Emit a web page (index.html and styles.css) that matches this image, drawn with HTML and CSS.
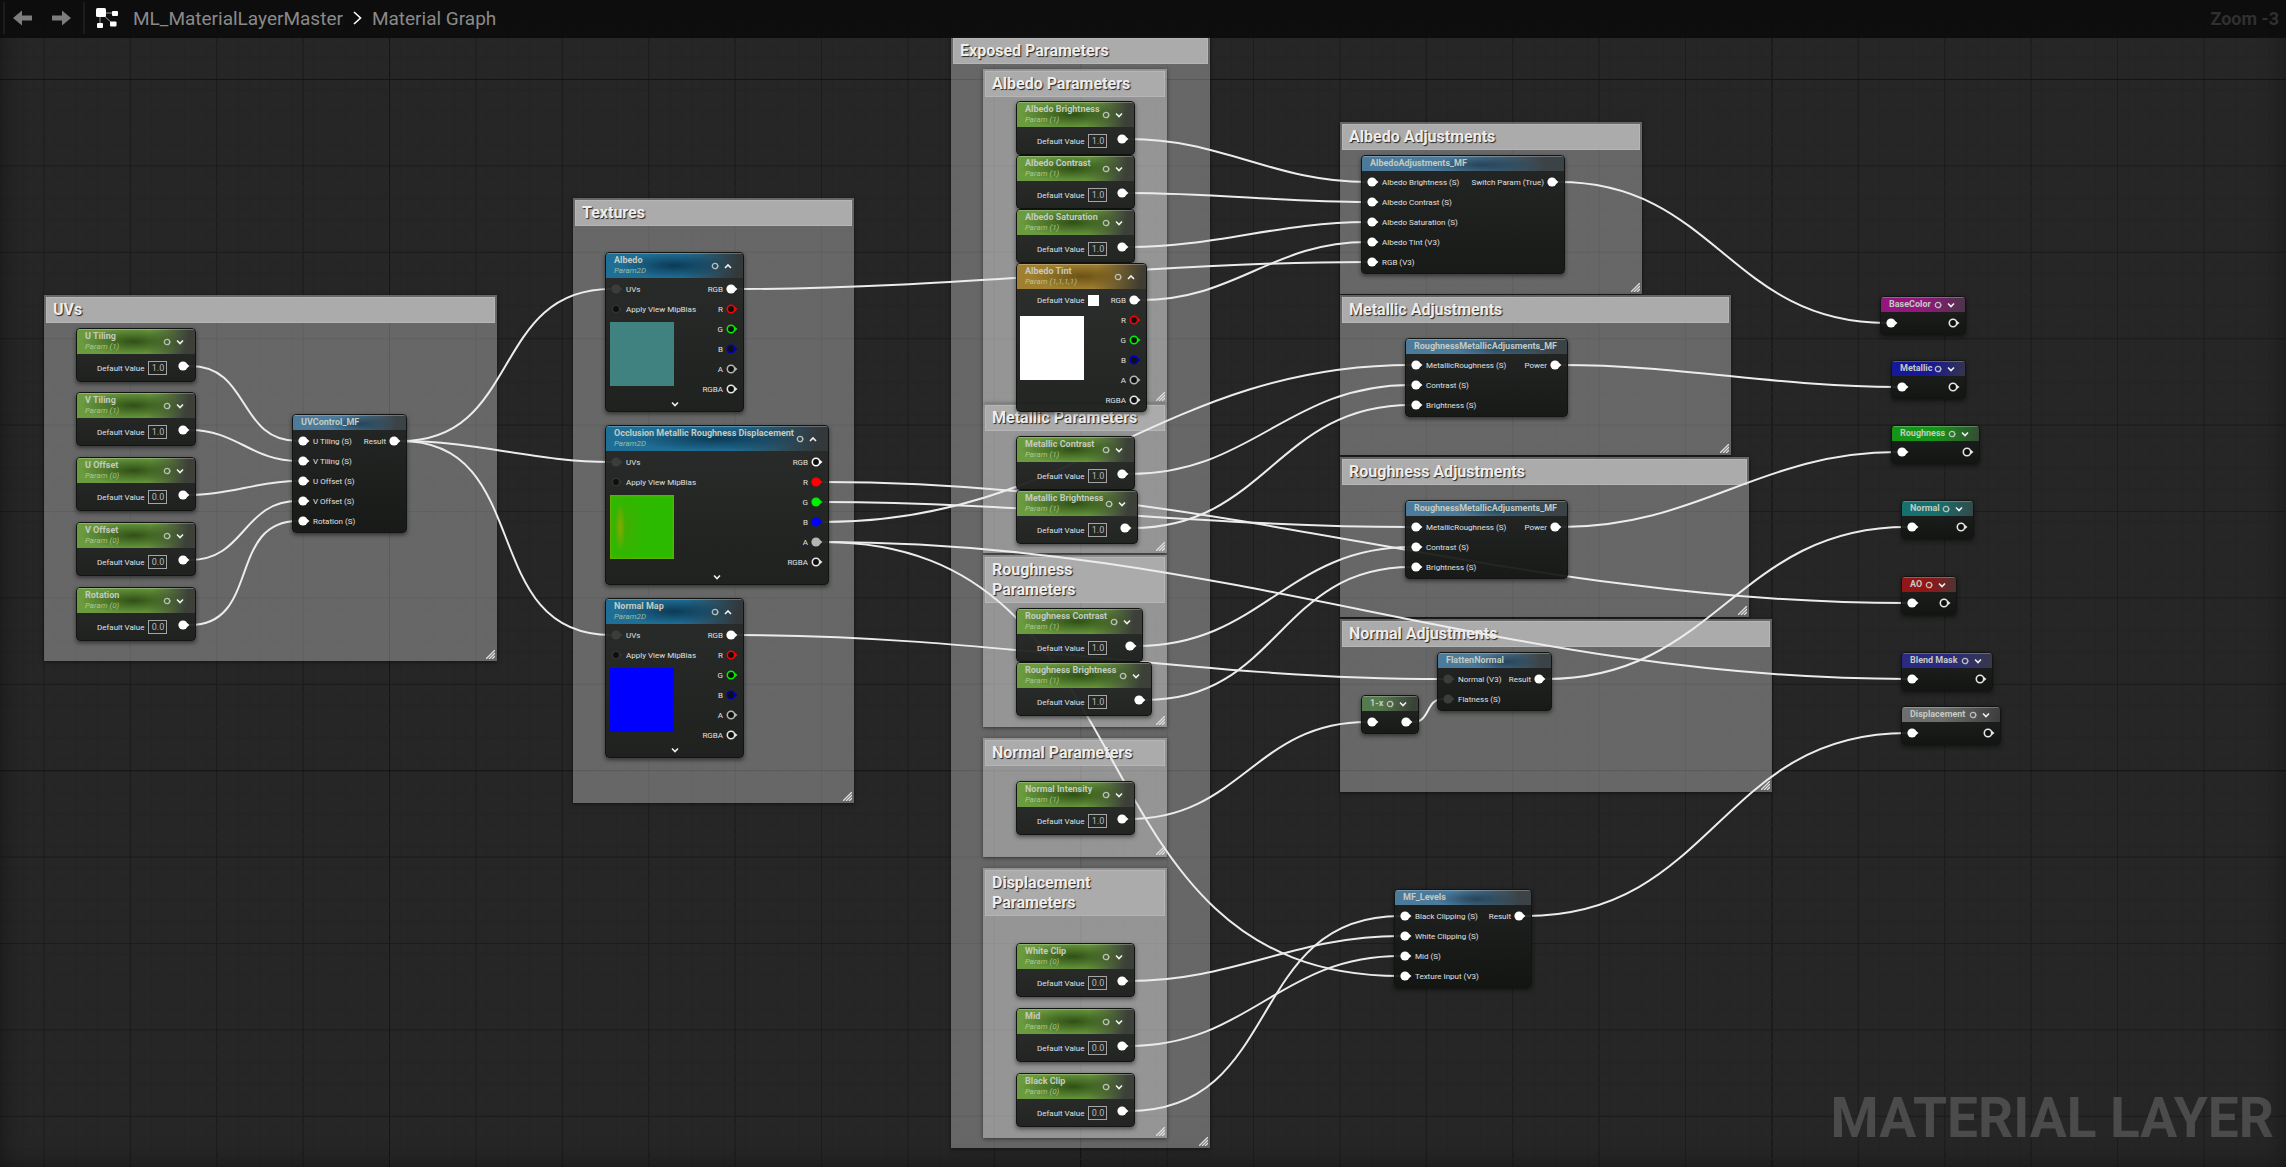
FILE: index.html
```html
<!DOCTYPE html>
<html lang="en">
<head>
  <meta charset="UTF-8" />
  <meta name="viewport" content="width=device-width, initial-scale=1.0"/>
  <title>ML_MaterialLayerMaster - Material Graph</title>
  <link rel="stylesheet" href="styles.css">
</head>
<body>
  <header class="topbar">
    <div class="history">
      <button class="icon-btn" aria-label="Back">
        <svg width="20" height="16" viewBox="0 0 20 16"><path d="M0 8 L9 0.5 V5.5 H19 V10.5 H9 V15.5 Z" fill="#7d7d7d"/></svg>
      </button>
      <button class="icon-btn" aria-label="Forward">
        <svg width="20" height="16" viewBox="0 0 20 16"><path d="M20 8 L11 0.5 V5.5 H1 V10.5 H11 V15.5 Z" fill="#7d7d7d"/></svg>
      </button>
    </div>
    <svg class="graph-icon" width="22" height="20" viewBox="0 0 22 20">
      <path d="M4 5 H18 M4 5 V17 M5 5 L17 16" stroke="#9a9a9a" stroke-width="1" fill="none"/>
      <rect x="0" y="0" width="10" height="9" rx="1.5" fill="#fff"/>
      <rect x="16" y="3" width="6" height="5" rx="1" fill="#fff"/>
      <rect x="1" y="15" width="6" height="5" rx="1" fill="#fff"/>
      <rect x="14" y="13.5" width="6.5" height="5" rx="1" fill="#fff"/>
    </svg>
    <nav class="breadcrumb">
      <a href="#">ML_MaterialLayerMaster</a>
      <svg width="9" height="14" viewBox="0 0 9 14"><path d="M1 1 L7.5 7 L1 13" stroke="#fff" stroke-width="1.6" fill="none"/></svg>
      <a href="#">Material Graph</a>
    </nav>
    <span class="zoom">Zoom -3</span>
  </header>

  <main class="canvas" id="canvas">
    <svg class="layer" id="grid"></svg>
    <div id="comments"></div>
    <svg class="layer" id="wires"></svg>
    <div id="nodes"></div>
    <div class="watermark">MATERIAL LAYER</div>
  </main>

  <script src="script.js"></script>
</body>
</html>
```

FILE: styles.css
```css
* {
  box-sizing: border-box;
}
body {
  margin: 0;
  height: 100vh;
  overflow: hidden;
  background: #262626;
  font-family: Roboto, "Liberation Sans", sans-serif;
  color: #e0e0e0;
}
button {
  padding: 0;
  border: none;
  background: none;
  color: inherit;
  cursor: pointer;
  display: flex;
}
svg {
  display: block;
}

/* Top bar */
.topbar {
  position: relative;
  z-index: 2;
  display: flex;
  align-items: center;
  height: 38px;
  padding: 0 7px 2px 3px;
  background: rgba(13, 13, 13, 0.95);
}
.history {
  display: flex;
  align-items: center;
  gap: 18px;
  height: 32px;
  padding: 0 12px 0 8px;
  border-left: 2px solid #1c1c1c;
  border-right: 2px solid #1c1c1c;
}
.graph-icon {
  margin: 0 15px 0 11px;
}
.breadcrumb {
  display: flex;
  align-items: center;
  gap: 10px;
  font-size: 19px;
}
.breadcrumb a {
  color: #8a8a8a;
  text-decoration: none;
}
.zoom {
  margin-left: auto;
  font-size: 18px;
  font-weight: bold;
  color: #303030;
}

/* Canvas */
.canvas {
  position: absolute;
  inset: 0;
  overflow: hidden;
}
.canvas::after {
  content: "";
  position: absolute;
  inset: 0;
  pointer-events: none;
  box-shadow: inset 0 0 24px rgba(0, 0, 0, 0.45);
}
.layer {
  position: absolute;
  inset: 0;
  width: 100%;
  height: 100%;
}
.wire {
  fill: none;
  stroke: #ececec;
  stroke-width: 2;
}
.watermark {
  position: absolute;
  right: 12px;
  bottom: 17px;
  font-size: 55px;
  line-height: 64px;
  font-weight: bold;
  color: #4b4b4b;
}

/* Comment boxes */
.comment {
  position: absolute;
  padding: 2px;
  background: rgba(255, 255, 255, 0.3);
  box-shadow: 0 1px 4px rgba(0, 0, 0, 0.5);
}
.comment h2 {
  margin: 0;
  padding: 2px 6px;
  background: #ababab;
  border: 1px solid #b6b6b6;
  font-size: 16px;
  line-height: 20px;
  font-weight: bold;
  color: #ededed;
  text-shadow: 1px 1px 1px #222;
}
.comment .grip {
  position: absolute;
  right: 2px;
  bottom: 2px;
}

/* Nodes */
.node {
  position: absolute;
  border: 1px solid #121412;
  border-radius: 4px;
  background: linear-gradient(rgba(37, 40, 38, 0.93), rgba(26, 28, 26, 0.93));
  box-shadow: 0 2px 4px rgba(0, 0, 0, 0.5);
  overflow: hidden;
  font-size: 8px;
}
.node.function, .node.output {
  background: linear-gradient(rgba(31, 34, 32, 0.93), rgba(18, 20, 18, 0.93));
}
.head {
  display: flex;
  align-items: center;
  height: 15px;
  padding: 0 11px 0 8px;
  box-shadow: inset 0 1px 0 rgba(255, 255, 255, 0.25);
}
.head.tall {
  height: 25px;
}
.output .head {
  padding-right: 10px;
}
.titles {
  white-space: nowrap;
}
.titles h3 {
  margin: 0;
  font-size: 9px;
  line-height: 11px;
  font-weight: bold;
  color: #c4cbc0;
}
.titles p {
  margin: 0;
  font-size: 8px;
  line-height: 10px;
  font-style: italic;
  color: rgba(205, 225, 175, 0.7);
}
.tools {
  display: flex;
  align-items: center;
  gap: 5px;
  margin-left: auto;
}
.green { background: radial-gradient(ellipse 45% 55% at 48% 50%, #2f5016, transparent), linear-gradient(100deg, #6b9b3f 60%, #3c4039 92%); }
.teal { background: radial-gradient(ellipse 40% 50% at 50% 50%, #0c3a55, transparent), linear-gradient(100deg, #1f6e96 55%, #33383b 95%); }
.gold { background: radial-gradient(ellipse 40% 50% at 50% 50%, #6b5216, transparent), linear-gradient(100deg, #a08030 60%, #403c32 95%); }
.blue { background: radial-gradient(ellipse 30% 60% at 60% 60%, #24455c, transparent), linear-gradient(100deg, #4b7a9b 45%, #3c4347 90%); }
.sage { background: linear-gradient(100deg, #557a4e 30%, #3a4238 90%); }
.magenta { background: linear-gradient(100deg, #93177f 50%, #4a3547 100%); }
.navy { background: linear-gradient(100deg, #17179a 50%, #35354a 100%); }
.lime { background: linear-gradient(100deg, #169418 50%, #364a36 100%); }
.cyan { background: linear-gradient(100deg, #15706e 50%, #354848 100%); }
.red { background: linear-gradient(100deg, #931616 50%, #4a3535 100%); }
.indigo { background: linear-gradient(100deg, #2a2a80 50%, #38384a 100%); }
.gray { background: linear-gradient(100deg, #6e6e6e 40%, #3c3c3c 100%); }

.body {
  display: flex;
  justify-content: space-between;
  padding: 1px 5px;
}
.pin-row {
  display: flex;
  align-items: center;
  gap: 3px;
  height: 20px;
  white-space: nowrap;
}
.outs .pin-row {
  justify-content: flex-end;
}
.default {
  display: flex;
  align-items: center;
  gap: 4px;
  height: 20px;
  padding-left: 15px;
  white-space: nowrap;
}
.default input[type="text"] {
  width: 19px;
  height: 14px;
  padding: 0;
  border: 1px solid #a5a5a5;
  background: transparent;
  font-family: inherit;
  font-size: 9px;
  text-align: center;
  color: #b8b8b8;
}
.swatch {
  width: 11px;
  height: 11px;
  background: #fff;
}
.param .body {
  padding-bottom: 0;
}
.param .default {
  height: 26px;
}
.param .pin-row {
  height: 22px;
}
.preview {
  width: 64px;
  height: 64px;
  margin: 3px 0 0 -1px;
}
.vector .preview {
  margin: 6px 0 0 -2px;
}
.albedo { background: #3f827f; }
.normal { background: #0000fe; }
.white { background: #fff; }
.ormd {
  background: radial-gradient(ellipse 8% 40% at 16% 50%, #8aa800, transparent), radial-gradient(ellipse 30% 60% at 25% 50%, #3fae00, transparent), #2cba00;
  box-shadow: inset 0 0 2px 1px #6fae00;
}
.expand {
  display: flex;
  justify-content: center;
  height: 11px;
}
```

FILE: script.js
```js
const SVG_NS = "http://www.w3.org/2000/svg";
const zoom = 0.675;

const comments = [
  { title: "UVs", x: 44, y: 295, w: 453, h: 366 },
  { title: "Textures", x: 573, y: 198, w: 281, h: 605 },
  { title: "Exposed Parameters", x: 951, y: 36, w: 259, h: 1112 },
  { title: "Albedo Parameters", x: 983, y: 69, w: 184, h: 334 },
  { title: "Metallic Parameters", x: 983, y: 403, w: 184, h: 150 },
  { title: "Roughness Parameters", x: 983, y: 555, w: 184, h: 172 },
  { title: "Normal Parameters", x: 983, y: 738, w: 184, h: 119 },
  { title: "Displacement Parameters", x: 983, y: 868, w: 184, h: 270 },
  { title: "Albedo Adjustments", x: 1340, y: 122, w: 302, h: 172 },
  { title: "Metallic Adjustments", x: 1340, y: 295, w: 391, h: 160 },
  { title: "Roughness Adjustments", x: 1340, y: 457, w: 409, h: 160 },
  { title: "Normal Adjustments", x: 1340, y: 619, w: 432, h: 173 }
];

const param = (id, title, value, x, y, w = 119) =>
  ({ id, type: "param", color: "green", title, sub: `Param (${parseInt(value)})`, value, x, y, w, outs: [["", "#fff", true]] });

// pins are [label, color, connected]
const channels = (used) => [
  ["RGB", "#fff"], ["R", "#f00"], ["G", "#0e0"], ["B", used.includes("B") ? "#00f" : "#00b"], ["A", "#b4b4b4"], ["RGBA", "#e6e6e6"]
].map(([label, color]) => [label, color, used.includes(label)]);

const texture = (id, title, preview, used, x, y, w) =>
  ({ id, type: "texture", color: "teal", title, sub: "Param2D", preview, x, y, w,
     ins: [["UVs", "#3b3d3b", true], ["Apply View MipBias", "#303230", false]], outs: channels(used), open: true });

const func = (id, title, ins, out, x, y, w) =>
  ({ id, type: "function", color: "blue", title, x, y, w, ins: ins.map(l => [l, "#fff", true]), outs: [[out, "#fff", true]] });

const output = (id, title, color, x, y, w) =>
  ({ id, type: "output", color, title, x, y, w, tools: true, ins: [["", "#fff", true]], outs: [["", "#e6e6e6", false]] });

const nodes = [
  param("uTiling", "U Tiling", "1.0", 76, 328, 120),
  param("vTiling", "V Tiling", "1.0", 76, 392, 120),
  param("uOffset", "U Offset", "0.0", 76, 457, 120),
  param("vOffset", "V Offset", "0.0", 76, 522, 120),
  param("rotation", "Rotation", "0.0", 76, 587, 120),
  func("uv", "UVControl_MF", ["U Tiling (S)", "V Tiling (S)", "U Offset (S)", "V Offset (S)", "Rotation (S)"], "Result", 292, 414, 115),

  texture("albedo", "Albedo", "albedo", ["RGB"], 605, 252, 139),
  texture("ormd", "Occlusion Metallic Roughness Displacement", "ormd", ["R", "G", "B", "A"], 605, 425, 224),
  texture("normalMap", "Normal Map", "normal", ["RGB"], 605, 598, 139),

  param("albedoBrightness", "Albedo Brightness", "1.0", 1016, 101),
  param("albedoContrast", "Albedo Contrast", "1.0", 1016, 155),
  param("albedoSaturation", "Albedo Saturation", "1.0", 1016, 209),
  { id: "tint", type: "vector", color: "gold", title: "Albedo Tint", sub: "Param (1,1,1,1)", swatch: true, preview: "white", x: 1016, y: 263, w: 131, outs: channels(["RGB"]) },
  param("metallicContrast", "Metallic Contrast", "1.0", 1016, 436),
  param("metallicBrightness", "Metallic Brightness", "1.0", 1016, 490, 122),
  param("roughnessContrast", "Roughness Contrast", "1.0", 1016, 608, 127),
  param("roughnessBrightness", "Roughness Brightness", "1.0", 1016, 662, 136),
  param("normalIntensity", "Normal Intensity", "1.0", 1016, 781),
  param("whiteClip", "White Clip", "0.0", 1016, 943),
  param("mid", "Mid", "0.0", 1016, 1008),
  param("blackClip", "Black Clip", "0.0", 1016, 1073),

  func("albedoAdj", "AlbedoAdjustments_MF", ["Albedo Brightness (S)", "Albedo Contrast (S)", "Albedo Saturation (S)", "Albedo Tint (V3)", "RGB (V3)"], "Switch Param (True)", 1361, 155, 204),
  func("metallicAdj", "RoughnessMetallicAdjusments_MF", ["MetallicRoughness (S)", "Contrast (S)", "Brightness (S)"], "Power", 1405, 338, 163),
  func("roughnessAdj", "RoughnessMetallicAdjusments_MF", ["MetallicRoughness (S)", "Contrast (S)", "Brightness (S)"], "Power", 1405, 500, 163),
  { id: "flatten", type: "function", color: "blue", title: "FlattenNormal", x: 1437, y: 652, w: 115, ins: [["Normal (V3)", "#3b3d3b", true], ["Flatness (S)", "#3b3d3b", true]], outs: [["Result", "#fff", true]] },
  { id: "oneMinus", type: "function", color: "sage", title: "1-x", x: 1361, y: 695, w: 58, tools: true, ins: [["", "#fff", true]], outs: [["", "#fff", true]] },
  func("levels", "MF_Levels", ["Black Clipping (S)", "White Clipping (S)", "Mid (S)", "Texture Input (V3)"], "Result", 1394, 889, 138),

  output("baseColor", "BaseColor", "magenta", 1880, 296, 86),
  output("metallic", "Metallic", "navy", 1891, 360, 75),
  output("roughness", "Roughness", "lime", 1891, 425, 89),
  output("normal", "Normal", "cyan", 1901, 500, 73),
  output("ao", "AO", "red", 1901, 576, 56),
  output("blendMask", "Blend Mask", "indigo", 1901, 652, 92),
  output("displacement", "Displacement", "gray", 1901, 706, 100)
];

// from node, output index, to node, input index
const links = [
  ["uTiling", 0, "uv", 0], ["vTiling", 0, "uv", 1], ["uOffset", 0, "uv", 2], ["vOffset", 0, "uv", 3], ["rotation", 0, "uv", 4],
  ["uv", 0, "albedo", 0], ["uv", 0, "ormd", 0], ["uv", 0, "normalMap", 0],
  ["albedo", 0, "albedoAdj", 4],
  ["albedoBrightness", 0, "albedoAdj", 0], ["albedoContrast", 0, "albedoAdj", 1], ["albedoSaturation", 0, "albedoAdj", 2], ["tint", 0, "albedoAdj", 3],
  ["ormd", 1, "ao", 0], ["ormd", 2, "roughnessAdj", 0], ["ormd", 3, "metallicAdj", 0], ["ormd", 4, "blendMask", 0], ["ormd", 4, "levels", 3],
  ["metallicContrast", 0, "metallicAdj", 1], ["metallicBrightness", 0, "metallicAdj", 2],
  ["roughnessContrast", 0, "roughnessAdj", 1], ["roughnessBrightness", 0, "roughnessAdj", 2],
  ["normalMap", 0, "flatten", 0], ["normalIntensity", 0, "oneMinus", 0], ["oneMinus", 0, "flatten", 1],
  ["blackClip", 0, "levels", 0], ["whiteClip", 0, "levels", 1], ["mid", 0, "levels", 2],
  ["albedoAdj", 0, "baseColor", 0], ["metallicAdj", 0, "metallic", 0], ["roughnessAdj", 0, "roughness", 0],
  ["flatten", 0, "normal", 0], ["levels", 0, "displacement", 0]
];

const chevron = (up) => `
  <button aria-label="${up ? "Collapse" : "Expand"}"><svg width="8" height="8" viewBox="0 0 8 8">
    <path d="${up ? "M1 6 L4 3 L7 6" : "M1 2.5 L4 5.5 L7 2.5"}" fill="none" stroke="#f0f0f0" stroke-width="1.6"/>
  </svg></button>`;

const previewIcon = `
  <button aria-label="Preview"><svg width="8" height="8" viewBox="0 0 8 8">
    <circle cx="4" cy="4" r="2.7" fill="none" stroke="#b9bfb6" stroke-width="1.3"/><path d="M6 2.5 L8 4 L6 5.5 Z" fill="#b9bfb6"/>
  </svg></button>`;

const pinSvg = (color, filled) => `
  <svg class="pin" width="12" height="10" viewBox="0 0 12 10">
    <circle cx="5" cy="5" r="${filled ? 4.6 : 3.7}" fill="${filled ? color : "#0d0f0d"}" stroke="${filled ? "none" : color}" stroke-width="1.6"/>
    <path d="M9 3 L11.5 5 L9 7 Z" fill="${color}"/>
  </svg>`;

function commentHtml(c) {
  return `
    <section class="comment" style="left:${c.x}px; top:${c.y}px; width:${c.w}px; height:${c.h}px">
      <h2>${c.title}</h2>
      <svg class="grip" width="9" height="9" viewBox="0 0 9 9"><path d="M0 9 L9 0 M3 9 L9 3 M6 9 L9 6" stroke="#e0e0e0" stroke-width="1.3"/></svg>
    </section>`;
}

function nodeHtml(n) {
  const ins = (n.ins || []).map(([label, color, filled]) =>
    `<div class="pin-row">${pinSvg(color, filled)}<span>${label}</span></div>`).join("");
  const outs = n.outs.map(([label, color, filled]) =>
    `<div class="pin-row"><span>${label}</span>${pinSvg(color, filled)}</div>`).join("");
  let value = "";
  if (n.value) {
    value = `<div class="default"><label for="${n.id}-value">Default Value</label><input type="text" id="${n.id}-value" value="${n.value}"></div>`;
  } else if (n.swatch) {
    value = `<div class="default"><span>Default Value</span><button class="swatch" aria-label="Default Value colour"></button></div>`;
  }
  return `
    <article class="node ${n.type}" id="${n.id}" style="left:${n.x}px; top:${n.y}px; width:${n.w}px">
      <div class="head ${n.color} ${n.sub ? "tall" : ""}">
        <div class="titles"><h3>${n.title}</h3>${n.sub ? `<p>${n.sub}</p>` : ""}</div>
        ${n.sub || n.tools ? `<div class="tools">${previewIcon}${chevron(Boolean(n.preview))}</div>` : ""}
      </div>
      <div class="body">
        <div class="ins">${ins}${value}${n.preview ? `<div class="preview ${n.preview}"></div>` : ""}</div>
        <div class="outs">${outs}</div>
      </div>
      ${n.open ? `<div class="expand">${chevron(false)}</div>` : ""}
    </article>`;
}

function addShape(parent, tag, attrs) {
  const el = document.createElementNS(SVG_NS, tag);
  for (const key in attrs) el.setAttribute(key, attrs[key]);
  parent.appendChild(el);
}

// Grid
function drawGrid() {
  const grid = document.getElementById("grid");
  const step = 16 * zoom;
  const w = window.innerWidth;
  const h = window.innerHeight;
  grid.innerHTML = "";
  const shade = (i) => i % 64 === 0 ? "#141414" : i % 8 === 0 ? "#1c1c1c" : "#252525";
  for (let i = -40; 389.5 + i * step < w; i++) {
    const x = 389.5 + i * step;
    addShape(grid, "line", { x1: x, y1: 0, x2: x, y2: h, stroke: shade(i) });
  }
  for (let i = -10; 79.5 + i * step < h; i++) {
    const y = 79.5 + i * step;
    addShape(grid, "line", { x1: 0, y1: y, x2: w, y2: y, stroke: shade(i) });
  }
}

// Wires
function drawWires() {
  const wires = document.getElementById("wires");
  wires.innerHTML = "";
  const pin = (id, side, index) => document.querySelectorAll(`#${id} .${side} .pin`)[index].getBoundingClientRect();
  links.forEach(([from, out, to, input]) => {
    const a = pin(from, "outs", out);
    const b = pin(to, "ins", input);
    const x1 = a.right, y1 = a.top + a.height / 2;
    const x2 = b.left, y2 = b.top + b.height / 2;
    const pull = (Math.abs(x2 - x1) + Math.abs(y2 - y1)) / 3;
    addShape(wires, "path", { class: "wire", d: `M${x1} ${y1} C${x1 + pull} ${y1} ${x2 - pull} ${y2} ${x2} ${y2}` });
  });
}

document.getElementById("comments").innerHTML = comments.map(commentHtml).join("");
document.getElementById("nodes").innerHTML = nodes.map(nodeHtml).join("");
drawGrid();
drawWires();
window.addEventListener("resize", drawGrid);
```
